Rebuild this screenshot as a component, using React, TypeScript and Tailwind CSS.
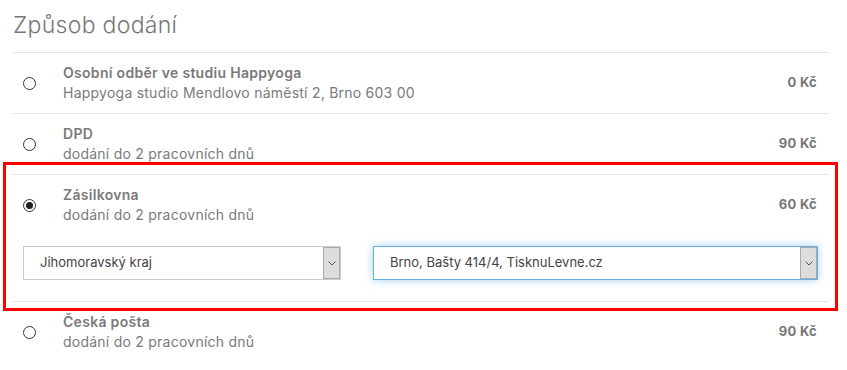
import React from "react";

type Option = {
  title: string;
  note: string;
  price: string;
  checked?: boolean;
};

const options: Option[] = [
  {
    title: "Osobní odběr ve studiu Happyoga",
    note: "Happyoga studio Mendlovo náměstí 2, Brno 603 00",
    price: "0 Kč",
  },
  { title: "DPD", note: "dodání do 2 pracovních dnů", price: "90 Kč" },
  {
    title: "Zásilkovna",
    note: "dodání do 2 pracovních dnů",
    price: "60 Kč",
    checked: true,
  },
  { title: "Česká pošta", note: "dodání do 2 pracovních dnů", price: "90 Kč" },
];

const Radio = ({ checked }: { checked?: boolean }) => (
  <span className="flex h-[13px] w-[13px] items-center justify-center rounded-full border border-[#333] bg-white">
    {checked && <span className="h-[7px] w-[7px] rounded-full bg-[#222]" />}
  </span>
);

const Select = ({ value, focused }: { value: string; focused?: boolean }) => (
  <div
    className={
      focused
        ? "flex h-[34px] flex-1 items-stretch border border-[#66afe9] bg-white shadow-[0_0_8px_rgba(102,175,233,0.6)]"
        : "flex h-[34px] w-[318px] items-stretch border border-[#ccc] bg-white"
    }
  >
    <span className="flex flex-1 items-center pl-[16px] text-[13px] text-[#444]">
      {value}
    </span>
    <span className="flex w-[17px] items-center justify-center border border-[#aaa] bg-[#ddd]">
      <svg width="8" height="5" viewBox="0 0 8 5" fill="none">
        <path d="M0.5 0.5L4 4L7.5 0.5" stroke="#555" strokeWidth="1" />
      </svg>
    </span>
  </div>
);

const Row = ({ data, last }: { data: Option; last?: boolean }) => (
  <div className={last ? "" : "border-b border-[#e3e3e3]"}>
    <div className="flex items-center py-[10px]">
      <div className="w-[50px] pl-[10px]">
        <Radio checked={data.checked} />
      </div>
      <div className="flex-1 leading-[20px] text-[14px] text-[#7a7a7a]">
        <div className="font-semibold tracking-[0.3px]">{data.title}</div>
        <div className="tracking-[0.24px]">{data.note}</div>
      </div>
      <div className="pr-[11px] text-[13px] font-bold tracking-[0.3px] text-[#777]">
        {data.price}
      </div>
    </div>
    {data.checked && (
      <div className="flex gap-[32px] px-[10px] pt-[11px] pb-[21px]">
        <Select value="Jihomoravský kraj" />
        <Select value="Brno, Bašty 414/4, TisknuLevne.cz" focused />
      </div>
    )}
  </div>
);

export default function App() {
  return (
    <div
      className="relative h-[370px] w-[847px] overflow-hidden bg-white pl-[13px] pr-[19px]"
      style={{ fontFamily: "Inter, 'Noto Sans', sans-serif" }}
    >
      <h2 className="pt-[10px] pb-[12px] text-[23px] font-light leading-[30px] tracking-[0.3px] text-[#777]">
        Způsob dodání
      </h2>
      <div className="border-t border-[#e3e3e3]">
        {options.map((o, i) => (
          <Row key={o.title} data={o} last={i === options.length - 1} />
        ))}
      </div>
      <div className="pointer-events-none absolute top-[162px] left-[3px] h-[149px] w-[835px] border-[3px] border-[#ff0000]" />
    </div>
  );
}
